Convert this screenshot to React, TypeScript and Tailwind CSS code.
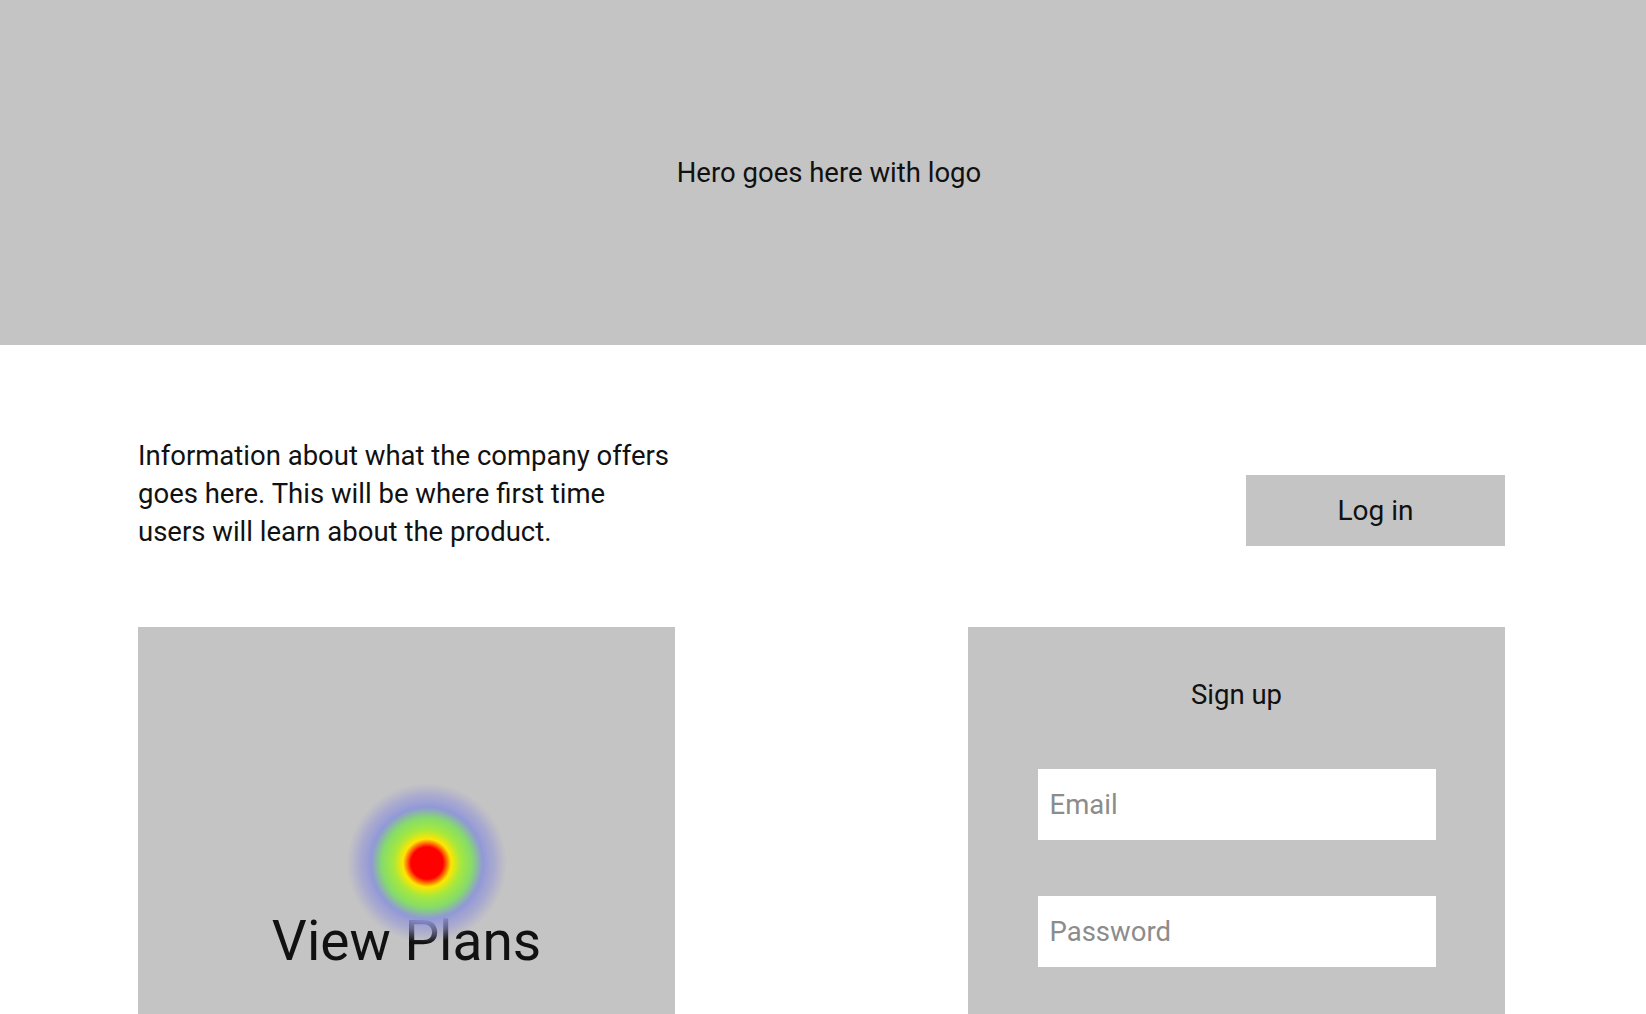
import React from "react";

const font = { fontFamily: "Roboto, 'Noto Sans', sans-serif" };

const HeatSpot: React.FC = () => (
  <svg
    width="160"
    height="160"
    viewBox="0 0 160 160"
    className="absolute left-[209px] top-[156px] pointer-events-none"
  >
    <defs>
      <radialGradient id="heat" cx="80" cy="80" r="80" gradientUnits="userSpaceOnUse">
        <stop offset="0" stopColor="#ff0000" />
        <stop offset="0.2" stopColor="#ff0000" />
        <stop offset="0.3" stopColor="#ffe600" />
        <stop offset="0.42" stopColor="#a6e83c" />
        <stop offset="0.56" stopColor="#86dc6a" />
        <stop offset="0.7" stopColor="#8e96d8" stopOpacity="0.95" />
        <stop offset="0.85" stopColor="#9a9ad6" stopOpacity="0.6" />
        <stop offset="1" stopColor="#a0a0d0" stopOpacity="0" />
      </radialGradient>
    </defs>
    <circle cx="80" cy="80" r="80" fill="url(#heat)" />
  </svg>
);

export default function App() {
  return (
    <div className="w-full h-screen overflow-hidden bg-white text-[#111]" style={font}>
      <header className="h-[345px] bg-[#c4c4c4] flex items-center justify-center">
        <h1 className="text-[27.5px] leading-none ml-[12px]">Hero goes here with logo</h1>
      </header>

      <main className="pl-[138px] pr-[141px]">
        <section className="flex justify-between items-start pt-[92px]">
          <p className="w-[534px] text-[27.5px] leading-[38px]">
            Information about what the company offers goes here. This will be where first time users will
            learn about the product.
          </p>
          <button className="mt-[38px] w-[259px] h-[71px] bg-[#c4c4c4] text-[28px] leading-none">
            Log in
          </button>
        </section>

        <section className="flex justify-between mt-[76px]">
          <div className="relative w-[537px] h-[420px] bg-[#c4c4c4] flex flex-col items-center">
            <div className="pt-[287px] text-[55px] leading-[55px]">View Plans</div>
            <HeatSpot />
          </div>

          <div className="w-[537px] h-[420px] bg-[#c4c4c4] flex flex-col items-center">
            <h2 className="pt-[56px] text-[27.5px] leading-[24px]">Sign up</h2>
            <div className="mt-[62px] flex flex-col gap-[56px]">
              <input
                className="w-[398px] h-[71px] bg-white px-[12px] text-[27.5px] outline-none placeholder:text-[#8c8c8c]"
                placeholder="Email"
              />
              <input
                type="password"
                className="w-[398px] h-[71px] bg-white px-[12px] text-[27.5px] outline-none placeholder:text-[#8c8c8c]"
                placeholder="Password"
              />
            </div>
          </div>
        </section>
      </main>
    </div>
  );
}
